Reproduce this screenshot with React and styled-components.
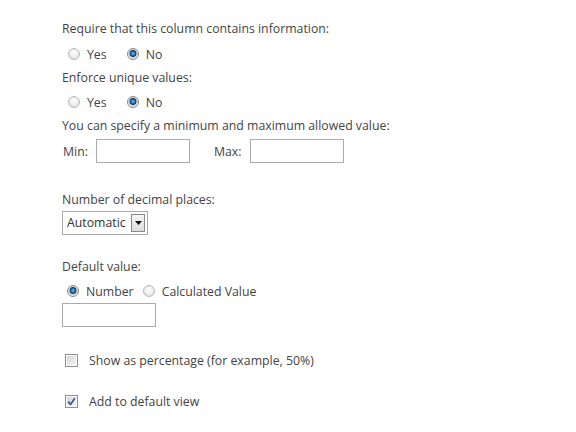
import styled, { createGlobalStyle } from "styled-components"

const Global = createGlobalStyle`
  body {
    margin: 0;
    background: #ffffff;
    font-family: "Open Sans", "Noto Sans", sans-serif;
    font-size: 12.3px;
    color: #444444;
  }
`

const Page = styled.div`
  width: 576px;
  height: 432px;
  box-sizing: border-box;
  padding: 20px 0 0 62px;
  display: flex;
  flex-direction: column;
`

const Label = styled.div`
  height: 18px;
  line-height: 18px;
  margin-top: ${(p) => p.$top || 0}px;
`

const Row = styled.div`
  display: flex;
  align-items: center;
  height: 20px;
  margin-top: ${(p) => p.$top || 0}px;
  padding-left: ${(p) => p.$indent || 0}px;
`

const Option = styled.label`
  display: flex;
  align-items: center;
  gap: 7px;
  margin-right: ${(p) => p.$gap || 0}px;
`

const RadioDot = styled.span`
  width: 12px;
  height: 12px;
  border-radius: 50%;
  box-sizing: border-box;
  border: 1px solid ${(p) => (p.$on ? "#8a8a8a" : "#b8b8b8")};
  background: ${(p) =>
    p.$on
      ? "radial-gradient(circle at 50% 45%, #6cc0f0 0, #2478b8 1.8px, #123e66 3.2px, #d8d8d8 3.8px, #f2f2f2 100%)"
      : "radial-gradient(circle at 50% 40%, #ffffff 0, #ebebeb 55%, #d4d4d4 100%)"};
`

const Field = styled.span`
  display: flex;
  align-items: center;
  gap: 8px;
  margin-right: ${(p) => p.$gap || 0}px;
`

const TextBox = styled.input`
  width: ${(p) => p.$w || 94}px;
  height: 24px;
  box-sizing: border-box;
  border: 1px solid #ababab;
  padding: 0 4px;
  margin: 0;
  font: inherit;
  outline: none;
`

const InputRow = styled.div`
  display: flex;
  align-items: center;
  margin-top: ${(p) => p.$top || 0}px;
  padding-left: ${(p) => p.$indent || 0}px;
`

const Select = styled.div`
  display: flex;
  align-items: stretch;
  width: 86px;
  height: 24px;
  box-sizing: border-box;
  border: 1px solid #ababab;
  margin-top: ${(p) => p.$top || 0}px;
`

const SelectValue = styled.span`
  flex: 1;
  padding-left: 4px;
  line-height: 22px;
  color: #333333;
`

const SelectButton = styled.span`
  width: 14px;
  margin: 2px 2px 2px 0;
  box-sizing: border-box;
  border: 1px solid #8a8a8a;
  background: linear-gradient(#f6f6f6, #dcdcdc);
  display: flex;
  align-items: center;
  justify-content: center;
`

const Check = styled.span`
  width: 13px;
  height: 13px;
  box-sizing: border-box;
  border: 1px solid #8f8f8f;
  background: linear-gradient(135deg, #d4d4d4, #f7f7f7);
  box-shadow: inset 0 0 0 1px #ffffff;
  display: flex;
  align-items: center;
  justify-content: center;
`

const CheckRow = styled.div`
  display: flex;
  align-items: center;
  gap: 11px;
  height: 20px;
  padding-left: 3px;
  margin-top: ${(p) => p.$top || 0}px;
`

function Radio({ on, children, gap }) {
  return (
    <Option $gap={gap}>
      <RadioDot $on={on} />
      {children}
    </Option>
  )
}

function Box({ on, children, top }) {
  return (
    <CheckRow $top={top}>
      <Check>
        {on && (
          <svg width="9" height="9" viewBox="0 0 9 9">
            <path d="M1.2 4.6 L3.6 7.4 L7.8 1.2" fill="none" stroke="#2f56a8" strokeWidth="1.7" />
          </svg>
        )}
      </Check>
      <span>{children}</span>
    </CheckRow>
  )
}

export default function App() {
  return (
    <>
      <Global />
      <Page>
        <Label>Require that this column contains information:</Label>
        <Row $top={6} $indent={6}>
          <Radio gap={20}>Yes</Radio>
          <Radio on>No</Radio>
        </Row>
        <Label $top={5}>Enforce unique values:</Label>
        <Row $top={5} $indent={6}>
          <Radio gap={20}>Yes</Radio>
          <Radio on>No</Radio>
        </Row>
        <Label $top={5}>You can specify a minimum and maximum allowed value:</Label>
        <InputRow $top={4} $indent={1}>
          <Field $gap={24}>
            Min:
            <TextBox $w={94} />
          </Field>
          <Field>
            Max:
            <TextBox $w={94} />
          </Field>
        </InputRow>
        <Label $top={28}>Number of decimal places:</Label>
        <Select $top={2}>
          <SelectValue>Automatic</SelectValue>
          <SelectButton>
            <svg width="7" height="4" viewBox="0 0 7 4">
              <path d="M0 0 H7 L3.5 4 Z" fill="#111" />
            </svg>
          </SelectButton>
        </Select>
        <Label $top={23}>Default value:</Label>
        <Row $top={5} $indent={5}>
          <Radio on gap={9}>Number</Radio>
          <Radio>Calculated Value</Radio>
        </Row>
        <InputRow $top={2}>
          <TextBox $w={94} />
        </InputRow>
        <Box top={23}>Show as percentage (for example, 50%)</Box>
        <Box on top={21}>Add to default view</Box>
      </Page>
    </>
  )
}
